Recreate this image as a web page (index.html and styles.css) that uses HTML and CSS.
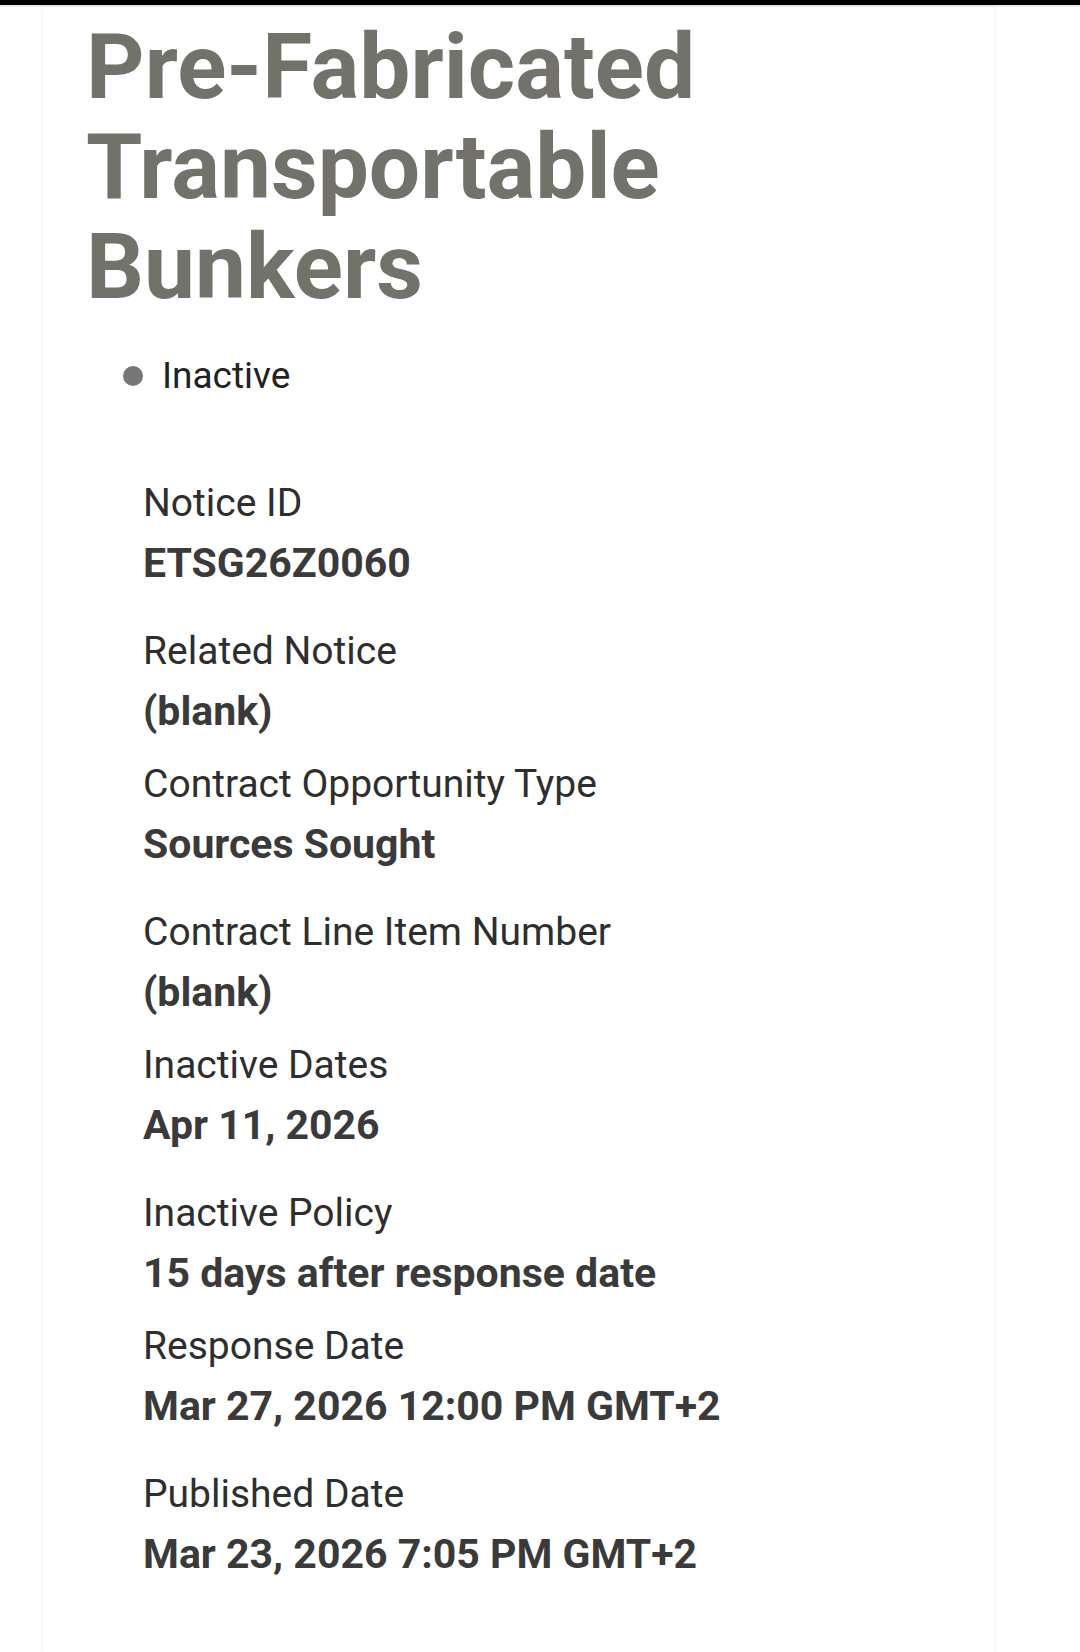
FILE: index.html
```html
<!DOCTYPE html>
<html lang="en">
<head>
<meta charset="utf-8">
<title>Pre-Fabricated Transportable Bunkers</title>
<link rel="stylesheet" href="styles.css">
</head>
<body>
<div class="page">
  <div class="topbar"></div>
  <main class="card">
    <h1 class="title">Pre-Fabricated Transportable Bunkers</h1>
    <div class="status"><span class="dot"></span><span class="status-text">Inactive</span></div>
    <dl class="fields">
      <div class="field">
        <dt class="label">Notice ID</dt>
        <dd class="value">ETSG26Z0060</dd>
      </div>
      <div class="field">
        <dt class="label">Related Notice</dt>
        <dd class="value">(blank)</dd>
      </div>
      <div class="field">
        <dt class="label">Contract Opportunity Type</dt>
        <dd class="value">Sources Sought</dd>
      </div>
      <div class="field">
        <dt class="label">Contract Line Item Number</dt>
        <dd class="value">(blank)</dd>
      </div>
      <div class="field">
        <dt class="label">Inactive Dates</dt>
        <dd class="value">Apr 11, 2026</dd>
      </div>
      <div class="field">
        <dt class="label">Inactive Policy</dt>
        <dd class="value">15 days after response date</dd>
      </div>
      <div class="field">
        <dt class="label">Response Date</dt>
        <dd class="value">Mar 27, 2026 12:00 PM GMT+2</dd>
      </div>
      <div class="field">
        <dt class="label">Published Date</dt>
        <dd class="value">Mar 23, 2026 7:05 PM GMT+2</dd>
      </div>
    </dl>
  </main>
</div>
</body>
</html>
```
FILE: styles.css
```css
* {
  box-sizing: border-box;
}

html, body {
  margin: 0;
  padding: 0;
  background: #ffffff;
}

body {
  font-family: Roboto, "Liberation Sans", sans-serif;
  color: #2b2b2b;
}

.page {
  min-height: 100vh;
  display: flex;
  flex-direction: column;
}

.topbar {
  height: 7px;
  background: #000000;
  border-bottom: 2px solid #ececec;
}

.card {
  flex: 1;
  margin: 0 86px 0 43px;
  padding: 10px 40px 40px 43px;
  background: #ffffff;
  box-shadow: 0 0 5px 1px rgba(0, 0, 0, 0.06);
}

.title {
  margin: 0;
  font-size: 91px;
  line-height: 100px;
  font-weight: 700;
  color: #72726b;
}

.status {
  display: flex;
  align-items: center;
  gap: 19px;
  margin-top: 37px;
  padding-left: 37px;
  height: 44px;
}

.dot {
  width: 20px;
  height: 20px;
  border-radius: 50%;
  background: #767676;
  flex: none;
}

.status-text {
  font-size: 37px;
  line-height: 44px;
  color: #222222;
}

.fields {
  margin: 81px 0 0 57px;
  padding: 0;
  display: flex;
  flex-direction: column;
}

.field {
  display: flex;
  flex-direction: column;
  gap: 12px;
}

.field:nth-child(odd) {
  margin-bottom: 40px;
}

.field:nth-child(even) {
  margin-bottom: 25px;
}

.label {
  margin: 0;
  font-size: 39px;
  line-height: 48px;
  font-weight: 400;
  color: #2e2e2e;
}

.value {
  margin: 0;
  font-size: 41px;
  line-height: 48px;
  font-weight: 700;
  color: #3a3a3a;
}
```
